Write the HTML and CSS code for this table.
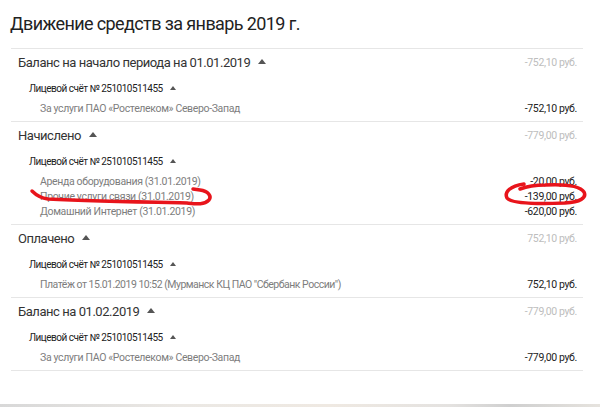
FILE: index.html
```html
<!DOCTYPE html>
<html lang="ru">
<head>
<meta charset="utf-8">
<link rel="stylesheet" href="styles.css">
</head>
<body>
<div class="page">
  <h1 class="title">Движение средств за январь 2019 г.</h1>

  <div class="section">
    <div class="head"><span class="head-label">Баланс на начало периода на 01.01.2019<i class="tri"></i></span><span class="head-sum">-752,10 руб.</span></div>
    <div class="acc">Лицевой счёт № 251010511455<i class="tri tri-sm"></i></div>
    <div class="items">
      <div class="item"><span class="item-label">За услуги ПАО «Ростелеком» Северо-Запад</span><span class="item-sum">-752,10 руб.</span></div>
    </div>
  </div>

  <div class="section">
    <div class="head"><span class="head-label">Начислено<i class="tri"></i></span><span class="head-sum">-779,00 руб.</span></div>
    <div class="acc">Лицевой счёт № 251010511455<i class="tri tri-sm"></i></div>
    <div class="items">
      <div class="item"><span class="item-label">Аренда оборудования (31.01.2019)</span><span class="item-sum">-20,00 руб.</span></div>
      <div class="item"><span class="item-label">Прочие услуги связи (31.01.2019)</span><span class="item-sum">-139,00 руб.</span></div>
      <div class="item"><span class="item-label">Домашний Интернет (31.01.2019)</span><span class="item-sum">-620,00 руб.</span></div>
    </div>
  </div>

  <div class="section">
    <div class="head"><span class="head-label">Оплачено<i class="tri"></i></span><span class="head-sum">752,10 руб.</span></div>
    <div class="acc">Лицевой счёт № 251010511455<i class="tri tri-sm"></i></div>
    <div class="items">
      <div class="item"><span class="item-label item-label-long">Платёж от 15.01.2019 10:52 (Мурманск КЦ ПАО "Сбербанк России")</span><span class="item-sum">752,10 руб.</span></div>
    </div>
  </div>

  <div class="section section-last">
    <div class="head"><span class="head-label">Баланс на 01.02.2019<i class="tri"></i></span><span class="head-sum">-779,00 руб.</span></div>
    <div class="acc">Лицевой счёт № 251010511455<i class="tri tri-sm"></i></div>
    <div class="items">
      <div class="item"><span class="item-label">За услуги ПАО «Ростелеком» Северо-Запад</span><span class="item-sum">-779,00 руб.</span></div>
    </div>
  </div>
</div>
<div class="strip"></div>

<svg class="marks" width="600" height="407" viewBox="0 0 600 407">
  <path d="M32 191 C36 195 40 198 48 199 C90 201 140 202 187 203 C197 204 204 205 209 200 C212 196 208 191 200 190 L193 189" fill="none" stroke="#e8141b" stroke-width="3.5" stroke-linecap="round" stroke-linejoin="round"/>
  <path d="M524 184 C510 186 504 192 507 198 C511 204 540 204 565 203 C580 202 587 198 584 192 C580 186 565 184 545 185 C535 185 528 186 520 189" fill="none" stroke="#e8141b" stroke-width="3.5" stroke-linecap="round" stroke-linejoin="round"/>
</svg>
</body>
</html>
```

FILE: styles.css
```css
html, body {
  margin: 0;
  padding: 0;
  background: #ffffff;
}

body {
  font-family: Roboto, "Noto Sans", sans-serif;
  color: #333333;
  position: relative;
  width: 600px;
  height: 407px;
  overflow: hidden;
}

.page {
  padding: 0 17px 0 11px;
}

.title {
  margin: 0 0 0 -1px;
  padding: 12px 0 0 0;
  height: 48px;
  box-sizing: border-box;
  font-size: 18px;
  line-height: 24px;
  letter-spacing: -0.6px;
  font-weight: 400;
  color: #222222;
}

.section {
  border-top: 1px solid #e6e6e6;
  padding: 4px 6px 5px 7px;
}

.section-last {
  border-bottom: 1px solid #e6e6e6;
}

.head {
  display: flex;
  justify-content: space-between;
  align-items: center;
  height: 18px;
}

.head-label {
  font-size: 13px;
  letter-spacing: -0.45px;
  color: #333333;
  display: flex;
  align-items: center;
}

.head-sum {
  font-size: 10.5px;
  letter-spacing: -0.35px;
  color: #bdbdbd;
}

.tri {
  display: inline-block;
  width: 0;
  height: 0;
  border-left: 4px solid transparent;
  border-right: 4px solid transparent;
  border-bottom: 5px solid #555555;
  margin-left: 8px;
  margin-top: -2px;
}

.tri-sm {
  border-left-width: 3.5px;
  border-right-width: 3.5px;
  border-bottom-width: 4px;
  margin-left: 7px;
}

.acc {
  margin-top: 10px;
  padding-left: 11px;
  height: 15px;
  font-size: 10px;
  line-height: 15px;
  letter-spacing: -0.5px;
  color: #222222;
  display: flex;
  align-items: center;
}

.items {
  margin-top: 5px;
  padding-left: 22px;
}

.item {
  display: flex;
  justify-content: space-between;
  height: 15px;
  line-height: 15px;
  font-size: 10.5px;
  letter-spacing: -0.35px;
}

.item-label {
  color: #7d7d7d;
}

.item-label-long {
  letter-spacing: -0.5px;
}

.item-sum {
  color: #222222;
}

.strip {
  position: absolute;
  left: 0;
  right: 0;
  bottom: 0;
  height: 3px;
  background: linear-gradient(90deg, #d8d8d8, #ebe8e4 30%, #efe9e2 55%, #e4e2e0 75%, #cfcfcf 85%, #e6e3de);
}

.marks {
  position: absolute;
  left: 0;
  top: 0;
  pointer-events: none;
}
```
